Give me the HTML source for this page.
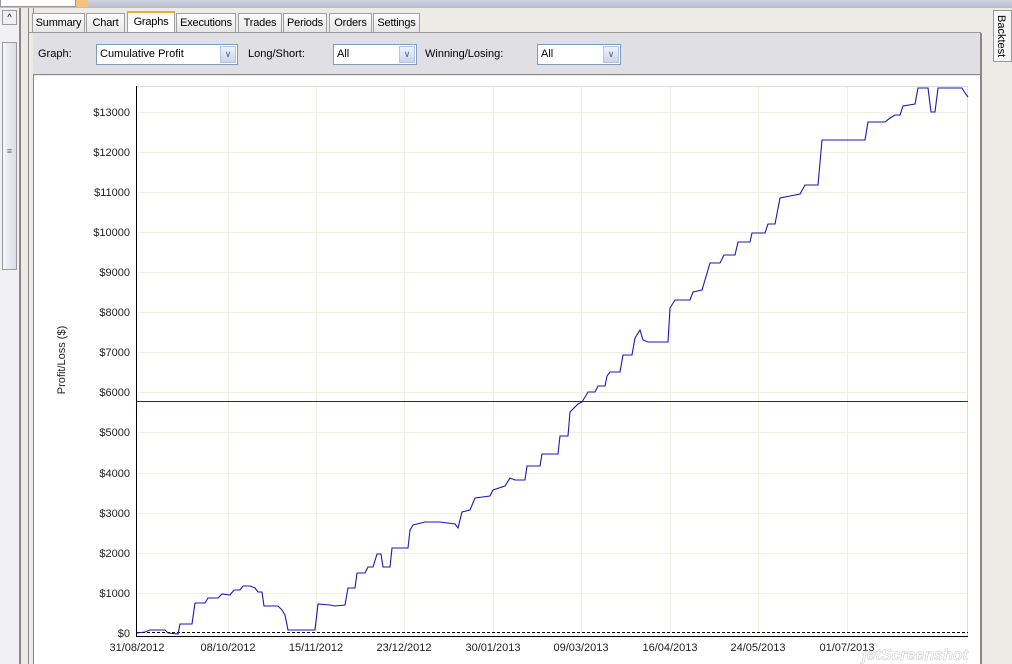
<!DOCTYPE html>
<html><head><style>
*{margin:0;padding:0;box-sizing:border-box}
body{width:1012px;height:664px;overflow:hidden;background:#ecebe6;font-family:"Liberation Sans",sans-serif;font-size:12px;position:relative}
.abs{position:absolute}
.tab{position:absolute;top:13px;height:19px;border:1px solid #a0a0a0;border-bottom:none;background:linear-gradient(#fcfcfc,#e6e6e6);font-size:11px;line-height:18px;text-align:center;color:#000;letter-spacing:-0.2px}
.sel{position:absolute;height:21px;background:#fff;border:1px solid #7f9db9;font-size:11px;line-height:19px;padding-left:3px}
.sel i{position:absolute;right:1px;top:1px;width:16px;height:17px;background:linear-gradient(#eef2fb,#c9d4ec);border:1px solid #b7c4e4;font-style:normal;font-size:9px;text-align:center;line-height:15px;color:#4d6185}
.lbl{position:absolute;top:48px;font-size:11px}
</style></head><body>
<div class="abs" style="left:0;top:0;width:1012px;height:8px;background:linear-gradient(#d0d3e0,#b8bccb)"></div>
<div class="abs" style="left:0;top:0;width:76px;height:7px;background:#fff;border:1px solid #999;border-top:none"></div>
<div class="abs" style="left:76px;top:0;width:12px;height:7px;background:#f4c27a"></div>
<div class="abs" style="left:0;top:8px;width:19px;height:656px;background:#f1f1f5"></div>
<div class="abs" style="left:2px;top:10px;width:15px;height:15px;border:1px solid #999;background:#f0f0f4;font-size:9px;text-align:center;line-height:12px">^</div>
<div class="abs" style="left:2px;top:42px;width:15px;height:228px;border:1px solid #999;background:linear-gradient(90deg,#f5f5fa,#dcdce8);font-size:9px;color:#666;text-align:center;padding-top:106px;line-height:4px">≡</div>
<div class="abs" style="left:19px;top:8px;width:2px;height:656px;background:#888"></div>
<div class="abs" style="left:21px;top:8px;width:7px;height:656px;background:#ecebe3"></div>
<div class="abs" style="left:28px;top:8px;width:1px;height:656px;background:#888"></div>
<div class="abs" style="left:33px;top:8px;width:1px;height:656px;background:#888"></div>
<div class="tab" style="left:32px;width:53px">Summary</div>
<div class="tab" style="left:86px;width:39px">Chart</div>
<div class="tab" style="left:127px;width:48px;top:11px;height:22px;background:#fcfcfe;border-top:2px solid #f0a830">Graphs</div>
<div class="tab" style="left:176px;width:60px">Executions</div>
<div class="tab" style="left:238px;width:44px">Trades</div>
<div class="tab" style="left:283px;width:44px">Periods</div>
<div class="tab" style="left:329px;width:43px">Orders</div>
<div class="tab" style="left:373px;width:47px">Settings</div>
<div class="abs" style="left:29px;top:32px;width:952px;height:1px;background:#999"></div>
<div class="abs" style="left:33px;top:33px;width:947px;height:42px;background:#e0dfe3;border-bottom:1px solid #888"></div>
<div class="lbl" style="left:38px">Graph:</div>
<div class="sel" style="left:96px;top:44px;width:142px">Cumulative Profit<i>&#x2228;</i></div>
<div class="lbl" style="left:248px">Long/Short:</div>
<div class="sel" style="left:333px;top:44px;width:84px">All<i>&#x2228;</i></div>
<div class="lbl" style="left:425px">Winning/Losing:</div>
<div class="sel" style="left:537px;top:44px;width:84px">All<i>&#x2228;</i></div>
<div class="abs" style="left:34px;top:76px;width:946px;height:588px;background:#fff"></div>
<div class="abs" style="left:980px;top:33px;width:2px;height:631px;background:#888"></div>
<div class="abs" style="left:982px;top:8px;width:30px;height:656px;background:#ecebe6"></div>
<div class="abs" style="left:993px;top:10px;width:19px;height:52px;border:1px solid #999;background:#f6f6f6"></div>
<div class="abs" style="left:995px;top:15px;font-size:11px;writing-mode:vertical-rl">Backtest</div>
<svg class="abs" style="left:0;top:0" width="1012" height="664" font-family="Liberation Sans,sans-serif" font-size="11">
<g stroke="#efefe2" stroke-width="1">
<line x1="228.5" y1="86" x2="228.5" y2="633"/><line x1="316.5" y1="86" x2="316.5" y2="633"/><line x1="404.5" y1="86" x2="404.5" y2="633"/><line x1="493.5" y1="86" x2="493.5" y2="633"/><line x1="581.5" y1="86" x2="581.5" y2="633"/><line x1="670.5" y1="86" x2="670.5" y2="633"/><line x1="758.5" y1="86" x2="758.5" y2="633"/><line x1="847.5" y1="86" x2="847.5" y2="633"/>
<line x1="136" y1="593.5" x2="968" y2="593.5"/><line x1="136" y1="553.5" x2="968" y2="553.5"/><line x1="136" y1="513.5" x2="968" y2="513.5"/><line x1="136" y1="473.5" x2="968" y2="473.5"/><line x1="136" y1="432.5" x2="968" y2="432.5"/><line x1="136" y1="392.5" x2="968" y2="392.5"/><line x1="136" y1="352.5" x2="968" y2="352.5"/><line x1="136" y1="312.5" x2="968" y2="312.5"/><line x1="136" y1="272.5" x2="968" y2="272.5"/><line x1="136" y1="232.5" x2="968" y2="232.5"/><line x1="136" y1="192.5" x2="968" y2="192.5"/><line x1="136" y1="152.5" x2="968" y2="152.5"/><line x1="136" y1="112.5" x2="968" y2="112.5"/>
</g>
<rect x="136.5" y="86.5" width="831" height="550" fill="none" stroke="#ddd"/>
<line x1="136.5" y1="86" x2="136.5" y2="637" stroke="#000"/>
<line x1="136" y1="636.5" x2="968" y2="636.5" stroke="#000"/>
<g fill="#222" text-anchor="end">
<text x="130" y="637">$0</text><text x="130" y="597">$1000</text><text x="130" y="557">$2000</text><text x="130" y="517">$3000</text><text x="130" y="477">$4000</text><text x="130" y="436">$5000</text><text x="130" y="396">$6000</text><text x="130" y="356">$7000</text><text x="130" y="316">$8000</text><text x="130" y="276">$9000</text><text x="130" y="236">$10000</text><text x="130" y="196">$11000</text><text x="130" y="156">$12000</text><text x="130" y="116">$13000</text>
</g>
<g fill="#222" text-anchor="middle">
<text x="137" y="651">31/08/2012</text><text x="228" y="651">08/10/2012</text><text x="316" y="651">15/11/2012</text><text x="404" y="651">23/12/2012</text><text x="493" y="651">30/01/2013</text><text x="581" y="651">09/03/2013</text><text x="670" y="651">16/04/2013</text><text x="758" y="651">24/05/2013</text><text x="847" y="651">01/07/2013</text>
</g>
<text transform="translate(65,360) rotate(-90)" text-anchor="middle" fill="#222">Profit/Loss ($)</text>
<line x1="137" y1="632.5" x2="968" y2="632.5" stroke="#000" stroke-dasharray="3,2"/>
<line x1="137" y1="401.5" x2="968" y2="401.5" stroke="#2020b0"/>
<polyline fill="none" stroke="#1a1ab0" stroke-width="1.1" points="137,633 145,632 150,630 165,630 168,633 178,634 180,624 192,624 195,603 205,603 208,598 218,598 222,594 230,595 234,590 240,590 243,586 250,586 255,588 258,592 262,592 264,606 278,606 282,610 285,615 288,630 315,630 318,604 330,605 335,606 345,605 348,588 355,588 357,573 365,573 368,567 373,567 377,554 381,554 383,567 390,567 392,548 408,548 410,530 413,525 425,522 440,522 455,524 458,528 462,512 470,510 475,498 490,496 493,490 505,486 510,478 515,480 525,480 527,466 540,466 542,454 558,454 560,436 568,436 570,412 578,404 582,402 588,392 595,392 598,386 605,386 607,376 610,372 620,372 623,355 632,355 635,338 640,330 643,340 648,342 668,342 670,308 675,300 690,300 693,292 702,290 705,280 710,263 720,263 724,255 735,255 738,242 750,242 752,233 765,233 768,224 775,224 780,198 790,196 800,194 805,185 818,185 822,140 865,140 868,122 885,122 890,118 895,115 900,115 903,106 915,104 918,88 928,88 931,112 935,112 938,88 962,88 965,93 968,97"/>
<text x="968" y="660" text-anchor="end" font-size="16" font-style="italic" font-weight="bold" fill="none" stroke="#ccc" stroke-width="0.6">jetScreenshot</text>
</svg>
</body></html>
